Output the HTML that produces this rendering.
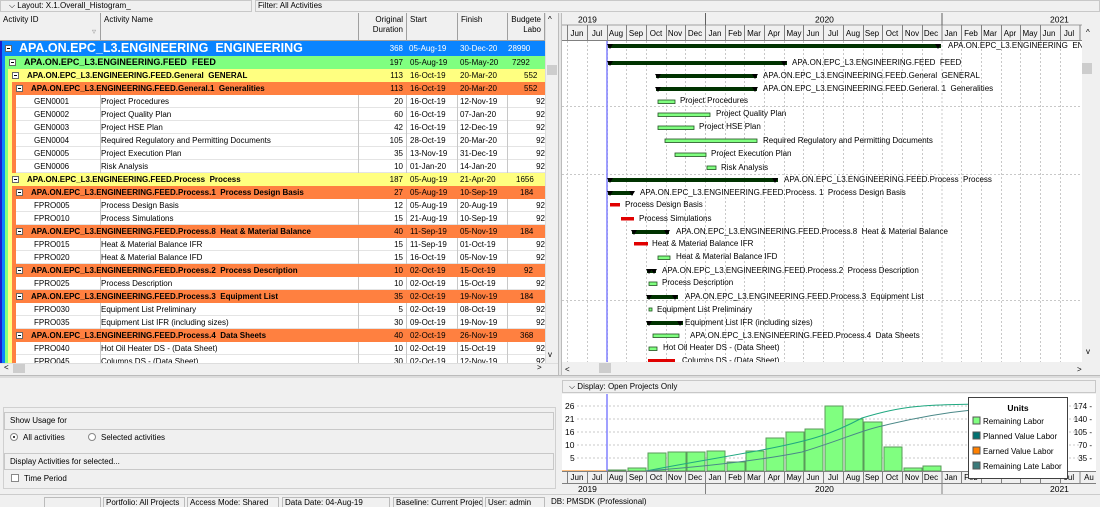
<!DOCTYPE html>
<html><head><meta charset="utf-8">
<style>
*{box-sizing:border-box;margin:0;padding:0}
body{width:1100px;height:507px;background:#f0f0f0;position:relative;overflow:hidden;font-family:"Liberation Sans",sans-serif;font-size:8px;color:#000}
.a{position:absolute}
.r{position:absolute;height:13px;left:0;width:545px;white-space:nowrap;overflow:hidden}
.r div{position:absolute;top:0;height:13px;line-height:13px}
.d{background:#fff;left:16px!important;right:0;border-bottom:1px solid #e4e4e4}
.c1{left:34px}.c2{left:101px}.c3{left:359px;width:44px;text-align:right}.c4{left:410px}.c5{left:460px}.c6{left:508px;width:37px;text-align:right}
.sep{position:absolute;top:0;width:1px;height:13px;background:#c8c8c8}
.g{font-weight:bold}
.r .box{position:absolute;width:7px;height:7px;border:1px solid #666;background:#fff;top:3px}
.r .box:after{content:"";position:absolute;left:1px;top:2px;width:3px;height:1px;background:#000}
.hd{position:absolute;top:13px;height:28px;background:#f0f0f0;border-right:1px solid #a0a0a0;border-bottom:1px solid #a0a0a0;padding:2px 3px;line-height:10px;font-size:8px}
</style></head><body>
<div class="a" style="left:0;top:0;width:252px;height:12px;border:1px solid #c8c8c8;background:#f0f0f0;font-size:8px;line-height:10px;padding-left:8px">⌵ Layout: X.1.Overall_Histogram_</div>
<div class="a" style="left:255px;top:0;width:845px;height:12px;border:1px solid #c8c8c8;background:#f0f0f0;font-size:8px;line-height:10px;padding-left:2px">Filter: All Activities</div>

<div class="hd" style="left:0;width:101px">Activity ID<span style="position:absolute;right:4px;top:14px;color:#999">▿</span></div>
<div class="hd" style="left:101px;width:258px">Activity Name</div>
<div class="hd" style="left:359px;width:48px;text-align:right">Original<br>Duration</div>
<div class="hd" style="left:407px;width:51px">Start</div>
<div class="hd" style="left:458px;width:50px">Finish</div>
<div class="hd" style="left:508px;width:37px;text-align:right;overflow:hidden">Budgete<br>Labo</div>
<div class="a" style="left:545px;top:13px;width:13px;height:350px;background:#f0f0f0;border-left:1px solid #ddd"></div>
<div class="a" style="left:548px;top:15px;font-size:8px">^</div>
<div class="a" style="left:547px;top:65px;width:10px;height:10px;background:#cdcdcd"></div>
<div class="a" style="left:548px;top:350px;font-size:8px">v</div>

<div class="a" style="left:0;top:41px;width:2px;height:322px;background:#1c1ccc"></div>
<div class="a" style="left:2px;top:41px;width:3px;height:322px;background:#0a84ff"></div>
<div class="a" style="left:5px;top:55px;width:3px;height:308px;background:#80ff80"></div>
<div class="a" style="left:8px;top:68px;width:4px;height:295px;background:#ffff80"></div>
<div class="a" style="left:12px;top:81px;width:4px;height:95px;background:#ff8040"></div>
<div class="a" style="left:12px;top:186px;width:4px;height:177px;background:#ff8040"></div>

<div class="r" style="top:41px;height:15px;left:2px;width:543px;background:#0a84ff;color:#fff"><div class="box" style="left:3px;top:4px"></div><div style="left:17px;height:15px;line-height:15px;font-size:12.5px;font-weight:bold">APA.ON.EPC_L3.ENGINEERING&nbsp; ENGINEERING</div><div style="left:357px;width:44px;text-align:right;height:15px;line-height:15px">368</div><div style="left:407px;height:15px;line-height:15px">05-Aug-19</div><div style="left:458px;height:15px;line-height:15px">30-Dec-20</div><div style="left:506px;height:15px;line-height:15px">28990</div></div>

<div class="r g" style="top:56px;left:5px;width:540px;background:#80ff80"><div class="box" style="left:4px"></div><div style="left:19px;font-size:9px">APA.ON.EPC_L3.ENGINEERING.FEED&nbsp; FEED</div><div style="left:354px;width:44px;text-align:right;font-weight:normal">197</div><div style="left:405px;font-weight:normal">05-Aug-19</div><div style="left:455px;font-weight:normal">05-May-20</div><div style="left:507px;font-weight:normal">7292</div></div>

<div class="r g" style="top:69px;left:8px;width:537px;background:#ffff80"><div class="box" style="left:4px"></div><div style="left:19px">APA.ON.EPC_L3.ENGINEERING.FEED.General&nbsp; GENERAL</div><div style="left:351px;width:44px;text-align:right;font-weight:normal">113</div><div style="left:402px;font-weight:normal">16-Oct-19</div><div style="left:452px;font-weight:normal">20-Mar-20</div><div style="left:516px;font-weight:normal">552</div></div>

<div class="r g" style="top:82px;left:12px;width:533px;background:#ff8040"><div class="box" style="left:4px"></div><div style="left:19px">APA.ON.EPC_L3.ENGINEERING.FEED.General.1&nbsp; Generalities</div><div style="left:347px;width:44px;text-align:right;font-weight:normal">113</div><div style="left:398px;font-weight:normal">16-Oct-19</div><div style="left:448px;font-weight:normal">20-Mar-20</div><div style="left:512px;font-weight:normal">552</div></div>

<div class="r" style="top:95px"><div class="d"></div><div class="sep" style="left:100px"></div><div class="sep" style="left:358px"></div><div class="sep" style="left:406px"></div><div class="sep" style="left:457px"></div><div class="sep" style="left:507px"></div><div class="c1">GEN0001</div><div class="c2">Project Procedures</div><div class="c3">20</div><div class="c4">16-Oct-19</div><div class="c5">12-Nov-19</div><div class="c6">92</div></div>
<div class="r" style="top:108px"><div class="d"></div><div class="sep" style="left:100px"></div><div class="sep" style="left:358px"></div><div class="sep" style="left:406px"></div><div class="sep" style="left:457px"></div><div class="sep" style="left:507px"></div><div class="c1">GEN0002</div><div class="c2">Project Quality Plan</div><div class="c3">60</div><div class="c4">16-Oct-19</div><div class="c5">07-Jan-20</div><div class="c6">92</div></div>
<div class="r" style="top:121px"><div class="d"></div><div class="sep" style="left:100px"></div><div class="sep" style="left:358px"></div><div class="sep" style="left:406px"></div><div class="sep" style="left:457px"></div><div class="sep" style="left:507px"></div><div class="c1">GEN0003</div><div class="c2">Project HSE Plan</div><div class="c3">42</div><div class="c4">16-Oct-19</div><div class="c5">12-Dec-19</div><div class="c6">92</div></div>
<div class="r" style="top:134px"><div class="d"></div><div class="sep" style="left:100px"></div><div class="sep" style="left:358px"></div><div class="sep" style="left:406px"></div><div class="sep" style="left:457px"></div><div class="sep" style="left:507px"></div><div class="c1">GEN0004</div><div class="c2">Required Regulatory and Permitting Documents</div><div class="c3">105</div><div class="c4">28-Oct-19</div><div class="c5">20-Mar-20</div><div class="c6">92</div></div>
<div class="r" style="top:147px"><div class="d"></div><div class="sep" style="left:100px"></div><div class="sep" style="left:358px"></div><div class="sep" style="left:406px"></div><div class="sep" style="left:457px"></div><div class="sep" style="left:507px"></div><div class="c1">GEN0005</div><div class="c2">Project Execution Plan</div><div class="c3">35</div><div class="c4">13-Nov-19</div><div class="c5">31-Dec-19</div><div class="c6">92</div></div>
<div class="r" style="top:160px"><div class="d"></div><div class="sep" style="left:100px"></div><div class="sep" style="left:358px"></div><div class="sep" style="left:406px"></div><div class="sep" style="left:457px"></div><div class="sep" style="left:507px"></div><div class="c1">GEN0006</div><div class="c2">Risk Analysis</div><div class="c3">10</div><div class="c4">01-Jan-20</div><div class="c5">14-Jan-20</div><div class="c6">92</div></div>

<div class="r g" style="top:173px;left:8px;width:537px;background:#ffff80"><div class="box" style="left:4px"></div><div style="left:19px">APA.ON.EPC_L3.ENGINEERING.FEED.Process&nbsp; Process</div><div style="left:351px;width:44px;text-align:right;font-weight:normal">187</div><div style="left:402px;font-weight:normal">05-Aug-19</div><div style="left:452px;font-weight:normal">21-Apr-20</div><div style="left:508px;font-weight:normal">1656</div></div>

<div class="r g" style="top:186px;left:12px;width:533px;background:#ff8040"><div class="box" style="left:4px"></div><div style="left:19px">APA.ON.EPC_L3.ENGINEERING.FEED.Process.1&nbsp; Process Design Basis</div><div style="left:347px;width:44px;text-align:right;font-weight:normal">27</div><div style="left:398px;font-weight:normal">05-Aug-19</div><div style="left:448px;font-weight:normal">10-Sep-19</div><div style="left:508px;font-weight:normal">184</div></div>
<div class="r" style="top:199px"><div class="d"></div><div class="sep" style="left:100px"></div><div class="sep" style="left:358px"></div><div class="sep" style="left:406px"></div><div class="sep" style="left:457px"></div><div class="sep" style="left:507px"></div><div class="c1">FPRO005</div><div class="c2">Process Design Basis</div><div class="c3">12</div><div class="c4">05-Aug-19</div><div class="c5">20-Aug-19</div><div class="c6">92</div></div>
<div class="r" style="top:212px"><div class="d"></div><div class="sep" style="left:100px"></div><div class="sep" style="left:358px"></div><div class="sep" style="left:406px"></div><div class="sep" style="left:457px"></div><div class="sep" style="left:507px"></div><div class="c1">FPRO010</div><div class="c2">Process Simulations</div><div class="c3">15</div><div class="c4">21-Aug-19</div><div class="c5">10-Sep-19</div><div class="c6">92</div></div>
<div class="r g" style="top:225px;left:12px;width:533px;background:#ff8040"><div class="box" style="left:4px"></div><div style="left:19px">APA.ON.EPC_L3.ENGINEERING.FEED.Process.8&nbsp; Heat &amp; Material Balance</div><div style="left:347px;width:44px;text-align:right;font-weight:normal">40</div><div style="left:398px;font-weight:normal">11-Sep-19</div><div style="left:448px;font-weight:normal">05-Nov-19</div><div style="left:508px;font-weight:normal">184</div></div>
<div class="r" style="top:238px"><div class="d"></div><div class="sep" style="left:100px"></div><div class="sep" style="left:358px"></div><div class="sep" style="left:406px"></div><div class="sep" style="left:457px"></div><div class="sep" style="left:507px"></div><div class="c1">FPRO015</div><div class="c2">Heat &amp; Material Balance IFR</div><div class="c3">15</div><div class="c4">11-Sep-19</div><div class="c5">01-Oct-19</div><div class="c6">92</div></div>
<div class="r" style="top:251px"><div class="d"></div><div class="sep" style="left:100px"></div><div class="sep" style="left:358px"></div><div class="sep" style="left:406px"></div><div class="sep" style="left:457px"></div><div class="sep" style="left:507px"></div><div class="c1">FPRO020</div><div class="c2">Heat &amp; Material Balance IFD</div><div class="c3">15</div><div class="c4">16-Oct-19</div><div class="c5">05-Nov-19</div><div class="c6">92</div></div>
<div class="r g" style="top:264px;left:12px;width:533px;background:#ff8040"><div class="box" style="left:4px"></div><div style="left:19px">APA.ON.EPC_L3.ENGINEERING.FEED.Process.2&nbsp; Process Description</div><div style="left:347px;width:44px;text-align:right;font-weight:normal">10</div><div style="left:398px;font-weight:normal">02-Oct-19</div><div style="left:448px;font-weight:normal">15-Oct-19</div><div style="left:512px;font-weight:normal">92</div></div>
<div class="r" style="top:277px"><div class="d"></div><div class="sep" style="left:100px"></div><div class="sep" style="left:358px"></div><div class="sep" style="left:406px"></div><div class="sep" style="left:457px"></div><div class="sep" style="left:507px"></div><div class="c1">FPRO025</div><div class="c2">Process Description</div><div class="c3">10</div><div class="c4">02-Oct-19</div><div class="c5">15-Oct-19</div><div class="c6">92</div></div>
<div class="r g" style="top:290px;left:12px;width:533px;background:#ff8040"><div class="box" style="left:4px"></div><div style="left:19px">APA.ON.EPC_L3.ENGINEERING.FEED.Process.3&nbsp; Equipment List</div><div style="left:347px;width:44px;text-align:right;font-weight:normal">35</div><div style="left:398px;font-weight:normal">02-Oct-19</div><div style="left:448px;font-weight:normal">19-Nov-19</div><div style="left:508px;font-weight:normal">184</div></div>
<div class="r" style="top:303px"><div class="d"></div><div class="sep" style="left:100px"></div><div class="sep" style="left:358px"></div><div class="sep" style="left:406px"></div><div class="sep" style="left:457px"></div><div class="sep" style="left:507px"></div><div class="c1">FPRO030</div><div class="c2">Equipment List Preliminary</div><div class="c3">5</div><div class="c4">02-Oct-19</div><div class="c5">08-Oct-19</div><div class="c6">92</div></div>
<div class="r" style="top:316px"><div class="d"></div><div class="sep" style="left:100px"></div><div class="sep" style="left:358px"></div><div class="sep" style="left:406px"></div><div class="sep" style="left:457px"></div><div class="sep" style="left:507px"></div><div class="c1">FPRO035</div><div class="c2">Equipment List IFR (including sizes)</div><div class="c3">30</div><div class="c4">09-Oct-19</div><div class="c5">19-Nov-19</div><div class="c6">92</div></div>
<div class="r g" style="top:329px;left:12px;width:533px;background:#ff8040"><div class="box" style="left:4px"></div><div style="left:19px">APA.ON.EPC_L3.ENGINEERING.FEED.Process.4&nbsp; Data Sheets</div><div style="left:347px;width:44px;text-align:right;font-weight:normal">40</div><div style="left:398px;font-weight:normal">02-Oct-19</div><div style="left:448px;font-weight:normal">26-Nov-19</div><div style="left:508px;font-weight:normal">368</div></div>
<div class="r" style="top:342px"><div class="d"></div><div class="sep" style="left:100px"></div><div class="sep" style="left:358px"></div><div class="sep" style="left:406px"></div><div class="sep" style="left:457px"></div><div class="sep" style="left:507px"></div><div class="c1">FPRO040</div><div class="c2">Hot Oil Heater DS - (Data Sheet)</div><div class="c3">10</div><div class="c4">02-Oct-19</div><div class="c5">15-Oct-19</div><div class="c6">92</div></div>
<div class="r" style="top:355px;height:8px"><div class="d"></div><div class="sep" style="left:100px"></div><div class="sep" style="left:358px"></div><div class="sep" style="left:406px"></div><div class="sep" style="left:457px"></div><div class="sep" style="left:507px"></div><div class="c1">FPRO045</div><div class="c2">Columns DS - (Data Sheet)</div><div class="c3">30</div><div class="c4">02-Oct-19</div><div class="c5">12-Nov-19</div><div class="c6">92</div></div>

<div class="a" style="left:0;top:363px;width:558px;height:11px;background:#f0f0f0;border-top:1px solid #ddd"></div>
<div class="a" style="left:4px;top:363px;font-size:8px">&lt;</div>
<div class="a" style="left:13px;top:364px;width:12px;height:9px;background:#cdcdcd"></div>
<div class="a" style="left:537px;top:363px;font-size:8px">&gt;</div>
<div class="a" style="left:558px;top:13px;width:4px;height:362px;background:#e6e6e6;border-left:1px solid #bbb;border-right:1px solid #bbb"></div>

<svg class="a" style="left:562px;top:13px" width="538" height="362" font-family="Liberation Sans, sans-serif">
<rect x="0" y="0" width="538" height="362" fill="#fff"/>
<rect x="0" y="0" width="538" height="28" fill="#f0f0f0"/>
<line x1="0" y1="12" x2="520" y2="12" stroke="#a0a0a0"/>
<line x1="0" y1="27.5" x2="520" y2="27.5" stroke="#808080"/>
<line x1="143.5" y1="0" x2="143.5" y2="12" stroke="#606060"/>
<line x1="380" y1="0" x2="380" y2="12" stroke="#606060"/>
<text x="16" y="9.5" font-size="8.5">2019</text>
<text x="253" y="9.5" font-size="8.5">2020</text>
<text x="488" y="9.5" font-size="8.5">2021</text>
<g font-size="8" text-anchor="middle">
<text x="15" y="23">Jun</text><text x="35" y="23">Jul</text><text x="54" y="23">Aug</text><text x="74" y="23">Sep</text><text x="94" y="23">Oct</text><text x="113" y="23">Nov</text><text x="133" y="23">Dec</text><text x="153" y="23">Jan</text><text x="173" y="23">Feb</text><text x="192" y="23">Mar</text><text x="212" y="23">Apr</text><text x="232" y="23">May</text><text x="251" y="23">Jun</text><text x="271" y="23">Jul</text><text x="291" y="23">Aug</text><text x="310" y="23">Sep</text><text x="330" y="23">Oct</text><text x="350" y="23">Nov</text><text x="369" y="23">Dec</text><text x="389" y="23">Jan</text><text x="409" y="23">Feb</text><text x="428" y="23">Mar</text><text x="448" y="23">Apr</text><text x="468" y="23">May</text><text x="487" y="23">Jun</text><text x="507" y="23">Jul</text>
</g>
<g stroke="#808080" stroke-width="1">
<path d="M5.5 12v16M25.5 12v16M45.5 12v16M64.5 12v16M84.5 12v16M104.5 12v16M123.5 12v16M143.5 12v16M163.5 12v16M182.5 12v16M202.5 12v16M222.5 12v16M241.5 12v16M261.5 12v16M281.5 12v16M301.5 12v16M320.5 12v16M340.5 12v16M360.5 12v16M380 12v16M399.5 12v16M419.5 12v16M439.5 12v16M458.5 12v16M478.5 12v16M498.5 12v16M518 12v16"/>
</g>
<g stroke="#c8c8c8" stroke-dasharray="2,2">
<path d="M5.5 28V349M25.5 28V349M45.5 28V349M64.5 28V349M84.5 28V349M104.5 28V349M123.5 28V349M143.5 28V349M163.5 28V349M182.5 28V349M202.5 28V349M222.5 28V349M241.5 28V349M261.5 28V349M281.5 28V349M301.5 28V349M320.5 28V349M340.5 28V349M360.5 28V349M380 28V349M399.5 28V349M419.5 28V349M439.5 28V349M458.5 28V349M478.5 28V349M498.5 28V349"/>
<path d="M0 93.5H520M0 161.5H520M0 287.5H520"/>
</g>
<line x1="45" y1="28" x2="45" y2="349" stroke="#8080ff" stroke-width="1.5"/>
<g fill="#003300">
<rect x="46" y="31" width="333" height="4"/><path d="M45 31h6l-3 5zM373 31h6l-3 5z" fill="#000"/>
<rect x="46" y="48" width="179" height="4"/><path d="M45 48h6l-3 5zM219 48h6l-3 5z" fill="#000"/>
<rect x="94" y="61" width="101" height="4"/><path d="M93 61h6l-3 5zM190 61h6l-3 5z" fill="#000"/>
<rect x="94" y="74" width="101" height="4"/><path d="M93 74h6l-3 5zM190 74h6l-3 5z" fill="#000"/>
<rect x="46" y="165" width="170" height="4"/><path d="M45 165h6l-3 5zM210 165h6l-3 5z" fill="#000"/>
<rect x="46" y="178" width="25" height="4"/><path d="M45 178h6l-3 5zM67 178h6l-3 5z" fill="#000"/>
<rect x="70" y="217" width="37" height="4"/><path d="M69 217h6l-3 5zM102 217h6l-3 5z" fill="#000"/>
<rect x="85" y="256" width="9" height="4"/><path d="M84 256h6l-3 5zM89 256h6l-3 5z" fill="#000"/>
<rect x="85" y="282" width="31" height="4"/><path d="M84 282h6l-3 5zM110 282h6l-3 5z" fill="#000"/>
<rect x="85" y="308" width="36" height="4"/><path d="M84 308h6l-3 5zM115 308h6l-3 5z" fill="#000"/>
</g>
<g stroke="#205020" stroke-width="0.8" fill="#80ff80">
<rect x="96" y="87" width="17" height="3.5"/>
<rect x="96" y="100" width="52" height="3.5"/>
<rect x="96" y="113" width="36" height="3.5"/>
<rect x="103" y="126" width="92" height="3.5"/>
<rect x="113" y="140" width="31" height="3.5"/>
<rect x="145" y="153" width="9" height="3.5"/>
<rect x="96" y="243" width="12" height="3.5"/>
<rect x="87" y="269" width="8" height="3.5"/>
<rect x="87" y="295" width="3" height="3"/>
<rect x="91" y="321" width="26" height="3.5"/>
<rect x="87" y="334" width="8" height="3.5"/>
</g>
<g fill="#e00000">
<rect x="48" y="190" width="10" height="3.5"/>
<rect x="59" y="204" width="13" height="3.5"/>
<rect x="72" y="229" width="14" height="3.5"/>
<rect x="86" y="346" width="27" height="3.5"/>
</g>
<g font-size="8" fill="#000">
<text x="386" y="35">APA.ON.EPC_L3.ENGINEERING&nbsp; ENG</text>
<text x="230" y="52">APA.ON.EPC_L3.ENGINEERING.FEED&nbsp; FEED</text>
<text x="201" y="65">APA.ON.EPC_L3.ENGINEERING.FEED.General&nbsp; GENERAL</text>
<text x="201" y="78">APA.ON.EPC_L3.ENGINEERING.FEED.General. 1&nbsp; Generalities</text>
<text x="118" y="90">Project Procedures</text>
<text x="154" y="103">Project Quality Plan</text>
<text x="137" y="116">Project HSE Plan</text>
<text x="201" y="130">Required Regulatory and Permitting Documents</text>
<text x="149" y="143">Project Execution Plan</text>
<text x="159" y="157">Risk Analysis</text>
<text x="222" y="169">APA.ON.EPC_L3.ENGINEERING.FEED.Process&nbsp; Process</text>
<text x="78" y="182">APA.ON.EPC_L3.ENGINEERING.FEED.Process. 1&nbsp; Process Design Basis</text>
<text x="63" y="194">Process Design Basis</text>
<text x="77" y="208">Process Simulations</text>
<text x="114" y="221">APA.ON.EPC_L3.ENGINEERING.FEED.Process.8&nbsp; Heat &amp; Material Balance</text>
<text x="90" y="233">Heat &amp; Material Balance IFR</text>
<text x="114" y="246">Heat &amp; Material Balance IFD</text>
<text x="100" y="260">APA.ON.EPC_L3.ENGINEERING.FEED.Process.2&nbsp; Process Description</text>
<text x="100" y="272">Process Description</text>
<text x="123" y="286">APA.ON.EPC_L3.ENGINEERING.FEED.Process.3&nbsp; Equipment List</text>
<text x="95" y="299">Equipment List Preliminary</text>
<text x="123" y="312">Equipment List IFR (including sizes)</text>
<text x="128" y="325">APA.ON.EPC_L3.ENGINEERING.FEED.Process.4&nbsp; Data Sheets</text>
<text x="101" y="337">Hot Oil Heater DS - (Data Sheet)</text>
<text x="120" y="350">Columns DS - (Data Sheet)</text>
</g>
<rect x="520" y="0" width="18" height="362" fill="#f0f0f0"/>
<text x="524" y="22" font-size="8">^</text>
<rect x="520" y="50" width="10" height="11" fill="#cdcdcd"/>
<text x="524" y="341" font-size="8">v</text>
<rect x="0" y="349" width="538" height="13" fill="#f0f0f0"/>
<text x="3" y="359" font-size="8">&lt;</text>
<rect x="37" y="350" width="12" height="10" fill="#cdcdcd"/>
<text x="515" y="359" font-size="8">&gt;</text>
</svg>

<div class="a" style="left:0;top:375px;width:1100px;height:3px;background:#dcdcdc;border-top:1px solid #bbb"></div>

<div class="a" style="left:4px;top:412px;width:550px;height:18px;border:1px solid #c8c8c8;background:#f0f0f0;padding-left:5px;line-height:16px;font-size:8px">Show Usage for</div>
<div class="a" style="left:10px;top:433px;width:8px;height:8px;border-radius:50%;border:1px solid #888;background:#fff"></div>
<div class="a" style="left:13px;top:436px;width:2px;height:2px;border-radius:50%;background:#000"></div>
<div class="a" style="left:23px;top:433px;font-size:8px">All activities</div>
<div class="a" style="left:88px;top:433px;width:8px;height:8px;border-radius:50%;border:1px solid #888;background:#fff"></div>
<div class="a" style="left:101px;top:433px;font-size:8px">Selected activities</div>
<div class="a" style="left:4px;top:453px;width:550px;height:17px;border:1px solid #c8c8c8;background:#f0f0f0;padding-left:5px;line-height:15px;font-size:8px">Display Activities for selected...</div>
<div class="a" style="left:11px;top:474px;width:8px;height:8px;border:1px solid #888;background:#fff"></div>
<div class="a" style="left:24px;top:474px;font-size:8px">Time Period</div>
<div class="a" style="left:3px;top:407px;width:553px;height:82px;border:1px solid #d0d0d0"></div>

<div class="a" style="left:562px;top:380px;width:534px;height:13px;border:1px solid #c8c8c8;background:#f0f0f0;padding-left:6px;line-height:11px;font-size:8px">⌵ Display: Open Projects Only</div>
<svg class="a" style="left:562px;top:394px" width="534" height="100" font-family="Liberation Sans, sans-serif">
<rect x="0" y="0" width="534" height="100" fill="#fff"/>
<g stroke="#c8c8c8" stroke-dasharray="2,2"><path d="M15 12H520M15 25H520M15 38H520M15 51H520M15 64H520"/></g>
<g font-size="8.5" fill="#000"><text x="3" y="15">26</text><text x="3" y="28">21</text><text x="3" y="41">16</text><text x="3" y="54">10</text><text x="8" y="67">5</text></g>
<g fill="#80ff80" stroke="#5a9a5a" stroke-width="1">
<rect x="46" y="76" width="18" height="1"/>
<rect x="66" y="74" width="18" height="3"/>
<rect x="86" y="59" width="18" height="18"/>
<rect x="106" y="58" width="18" height="19"/>
<rect x="125" y="58" width="18" height="19"/>
<rect x="145" y="57" width="18" height="20"/>
<rect x="165" y="68" width="18" height="9"/>
<rect x="184" y="57" width="18" height="20"/>
<rect x="204" y="44" width="18" height="33"/>
<rect x="224" y="38" width="18" height="39"/>
<rect x="243" y="35" width="18" height="42"/>
<rect x="263" y="12" width="18" height="65"/>
<rect x="283" y="25" width="18" height="52"/>
<rect x="302" y="28" width="18" height="49"/>
<rect x="322" y="53" width="18" height="24"/>
<rect x="342" y="74" width="18" height="3"/>
<rect x="361" y="72" width="18" height="5"/>
</g>
<line x1="0" y1="77" x2="46" y2="77" stroke="#ff8000"/>
<path d="M84 77C130 68 170 62 210 54C250 46 270 40 300 24C340 12 360 10 440 10H470" fill="none" stroke="#1fa880" stroke-width="1"/>
<path d="M84 77C150 72 200 66 240 58C280 46 300 36 320 32C360 22 390 18 410 16" fill="none" stroke="#4a8888" stroke-width="1"/>
<line x1="45" y1="0" x2="45" y2="77" stroke="#8080ff" stroke-width="1.5"/>
<g font-size="8" fill="#000" text-anchor="end"><text x="530" y="15">174 -</text><text x="530" y="28">140 -</text><text x="530" y="41">105 -</text><text x="530" y="54">70 -</text><text x="530" y="67">35 -</text></g>
<rect x="0" y="77" width="534" height="23" fill="#f0f0f0"/>
<line x1="0" y1="77.5" x2="534" y2="77.5" stroke="#808080"/>
<line x1="0" y1="89.5" x2="534" y2="89.5" stroke="#808080"/>
<g stroke="#808080"><path d="M5.5 77v12M25.5 77v12M45.5 77v12M64.5 77v12M84.5 77v12M104.5 77v12M123.5 77v12M143.5 77v23M163.5 77v12M182.5 77v12M202.5 77v12M222.5 77v12M241.5 77v12M261.5 77v12M281.5 77v12M301.5 77v12M320.5 77v12M340.5 77v12M360.5 77v12M380 77v23M399.5 77v12M419.5 77v12M439.5 77v12M458.5 77v12M478.5 77v12M498.5 77v12M518 77v12"/></g>
<g font-size="8" text-anchor="middle">
<text x="15" y="86">Jun</text><text x="35" y="86">Jul</text><text x="54" y="86">Aug</text><text x="74" y="86">Sep</text><text x="94" y="86">Oct</text><text x="113" y="86">Nov</text><text x="133" y="86">Dec</text><text x="153" y="86">Jan</text><text x="173" y="86">Feb</text><text x="192" y="86">Mar</text><text x="212" y="86">Apr</text><text x="232" y="86">May</text><text x="251" y="86">Jun</text><text x="271" y="86">Jul</text><text x="291" y="86">Aug</text><text x="310" y="86">Sep</text><text x="330" y="86">Oct</text><text x="350" y="86">Nov</text><text x="369" y="86">Dec</text><text x="389" y="86">Jan</text><text x="409" y="86">Feb</text><text x="507" y="86">Jul</text><text x="527" y="86">Au</text>
</g>
<g font-size="8.5"><text x="16" y="98">2019</text><text x="253" y="98">2020</text><text x="488" y="98">2021</text></g>
<rect x="406.5" y="3.5" width="99" height="81" fill="#fff" stroke="#404040"/>
<text x="456" y="17" font-size="8.5" font-weight="bold" text-anchor="middle">Units</text>
<rect x="411" y="23" width="7" height="7" fill="#80ff80" stroke="#555"/>
<rect x="411" y="38" width="7" height="7" fill="#007070" stroke="#555"/>
<rect x="411" y="53" width="7" height="7" fill="#ff8000" stroke="#555"/>
<rect x="411" y="68" width="7" height="7" fill="#3a7a7a" stroke="#555"/>
<g font-size="8"><text x="421" y="30">Remaining Labor</text><text x="421" y="45">Planned Value Labor</text><text x="421" y="60">Earned Value Labor</text><text x="421" y="75">Remaining Late Labor</text></g>
</svg>

<div class="a" style="left:0;top:494px;width:1100px;height:13px;background:#f0f0f0;border-top:1px solid #ccc;overflow:hidden;font-size:8px;line-height:12px;white-space:nowrap">
<div class="a" style="left:44px;top:2px;width:57px;height:12px;border:1px solid #bbb"></div>
<div class="a" style="left:103px;top:2px;width:82px;height:12px;border:1px solid #bbb;padding-left:2px;line-height:9px">Portfolio: All Projects</div>
<div class="a" style="left:187px;top:2px;width:92px;height:12px;border:1px solid #bbb;padding-left:2px;line-height:9px">Access Mode: Shared</div>
<div class="a" style="left:282px;top:2px;width:108px;height:12px;border:1px solid #bbb;padding-left:2px;line-height:9px">Data Date: 04-Aug-19</div>
<div class="a" style="left:393px;top:2px;width:90px;height:12px;border:1px solid #bbb;padding-left:2px;line-height:9px;overflow:hidden">Baseline: Current Project</div>
<div class="a" style="left:485px;top:2px;width:60px;height:12px;border:1px solid #bbb;padding-left:2px;line-height:9px">User: admin</div>
<div class="a" style="left:549px;top:2px;width:200px;height:12px;padding-left:2px;line-height:9px">DB: PMSDK (Professional)</div>
</div>
</body></html>
